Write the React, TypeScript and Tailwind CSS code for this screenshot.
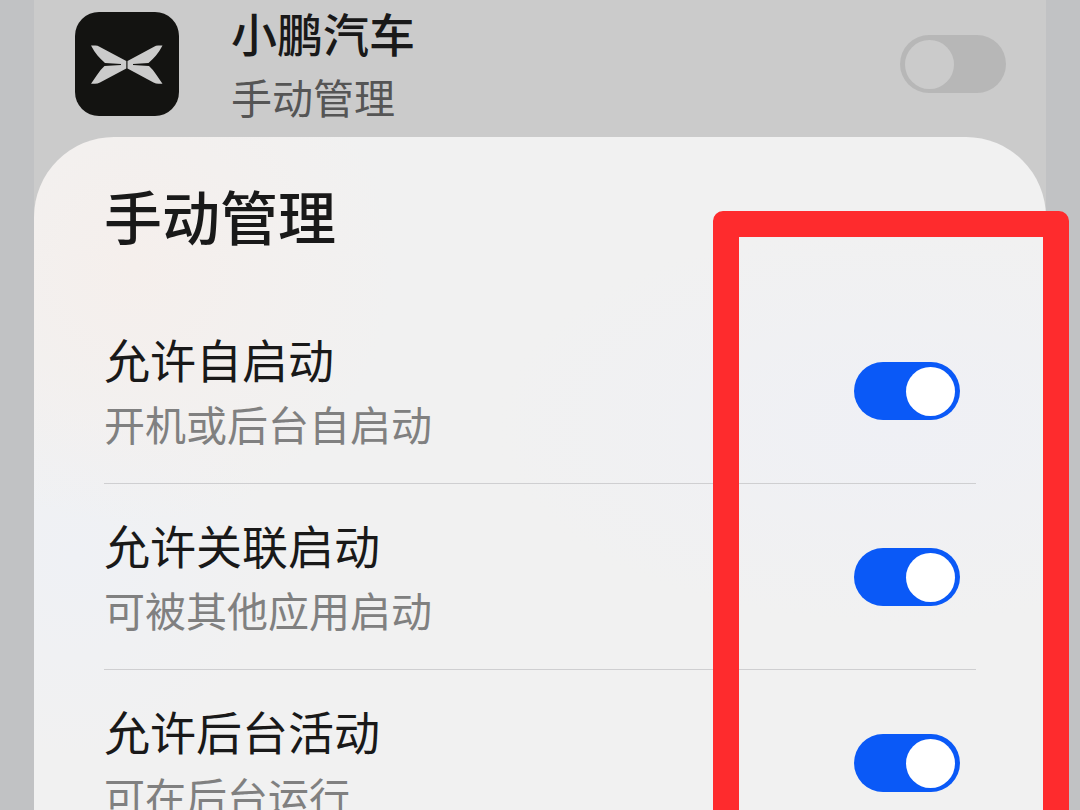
import React, { useState } from 'react';

interface ToggleProps {
  id: string;
  checked: boolean;
  onChange: () => void;
}

const Toggle: React.FC<ToggleProps> = ({ id, checked, onChange }) => (
  <input
    id={id}
    type="checkbox"
    role="switch"
    checked={checked}
    onChange={onChange}
    className="flex h-[58px] w-[106px] shrink-0 appearance-none items-center rounded-full bg-[#b7b7b7] px-[5px] before:size-[49px] before:rounded-full before:bg-[#cbcbcb] checked:justify-end checked:bg-[#0a59f7] checked:before:bg-white"
  />
);

const AppLogo: React.FC = () => (
  <svg viewBox="0 0 104 104" className="size-[104px] shrink-0" aria-hidden="true">
    <rect width="104" height="104" rx="24" fill="#131311" />
    <g fill="#cbcbcb">
      <path d="M16 33.500h4.500q2 0 4 1.200L51.300 49v7.500L25 70.500q-2.500 1.200-5 1.200h-4l6-8.700q3.500-5.500 7.500-9l16.500-1v-1l-16-1q-4-3.500-7.500-7.500-4-5-6.500-10z" />
      <path d="M87.500 33.500H83q-2 0-4 1.200L52.500 49v7.500L78.500 70.500q2.500 1.200 5 1.200h4l-6-8.700q-3.500-5.500-7.500-9l-16-1v-1l15.500-1q4-3.500 7.500-7.500 4-5 6.500-10z" />
    </g>
  </svg>
);

interface Permission {
  id: string;
  title: string;
  description: string;
}

const permissions: Permission[] = [
  { id: 'auto-launch', title: '允许自启动', description: '开机或后台自启动' },
  { id: 'secondary-launch', title: '允许关联启动', description: '可被其他应用启动' },
  { id: 'background', title: '允许后台活动', description: '可在后台运行' }
];

const App: React.FC = () => {
  const [appEnabled, setAppEnabled] = useState(false);
  const [enabled, setEnabled] = useState<Record<string, boolean>>({
    'auto-launch': true,
    'secondary-launch': true,
    background: true
  });

  const toggle = (id: string) => setEnabled(prev => ({ ...prev, [id]: !prev[id] }));

  return (
    <div className="relative h-screen overflow-hidden bg-[#c1c2c4] px-[34px] font-['Noto_Sans_CJK_SC',sans-serif] text-[#191919]">
      <main className="bg-[#cbcbcb]">
        {/* App entry behind the sheet */}
        <header className="flex items-center pr-10 pb-[9px] pl-[41px]">
          <AppLogo />
          <label htmlFor="app-toggle" className="ml-[52px] flex-1">
            <span className="block text-[46px] leading-[64px] font-medium">小鹏汽车</span>
            <span className="block text-[41px] leading-[64px] text-[#555555]">手动管理</span>
          </label>
          <Toggle id="app-toggle" checked={appEnabled} onChange={() => setAppEnabled(!appEnabled)} />
        </header>

        {/* Bottom sheet */}
        <section className="rounded-t-[80px] bg-[#f1f1f1] bg-[radial-gradient(circle_at_100px_130px,#f5efec,transparent_260px),radial-gradient(circle_at_40px_420px,#eff1f5,transparent_200px),radial-gradient(ellipse_at_85%_40%,#eff0f5,transparent_400px)] px-[70px] pt-9">
          <h1 className="mb-[41px] text-[58px] leading-[84px] font-medium">手动管理</h1>
          <ul>
            {permissions.map(({ id, title, description }) => (
              <li key={id} className="flex items-center border-b border-[#cfcfd1] pt-7 pr-4 pb-[27px]">
                <label htmlFor={id} className="flex-1">
                  <span className="block text-[46px] leading-[64px]">{title}</span>
                  <span className="block text-[41px] leading-[66px] text-[#808080]">{description}</span>
                </label>
                <Toggle id={id} checked={enabled[id]} onChange={() => toggle(id)} />
              </li>
            ))}
          </ul>
        </section>
      </main>

      {/* Highlight frame over the switches */}
      <div className="pointer-events-none absolute top-[211px] right-[11px] -bottom-8 w-[356px] rounded-[10px] border-[26px] border-[#fe2b2d]" />
    </div>
  );
};

export default App;
